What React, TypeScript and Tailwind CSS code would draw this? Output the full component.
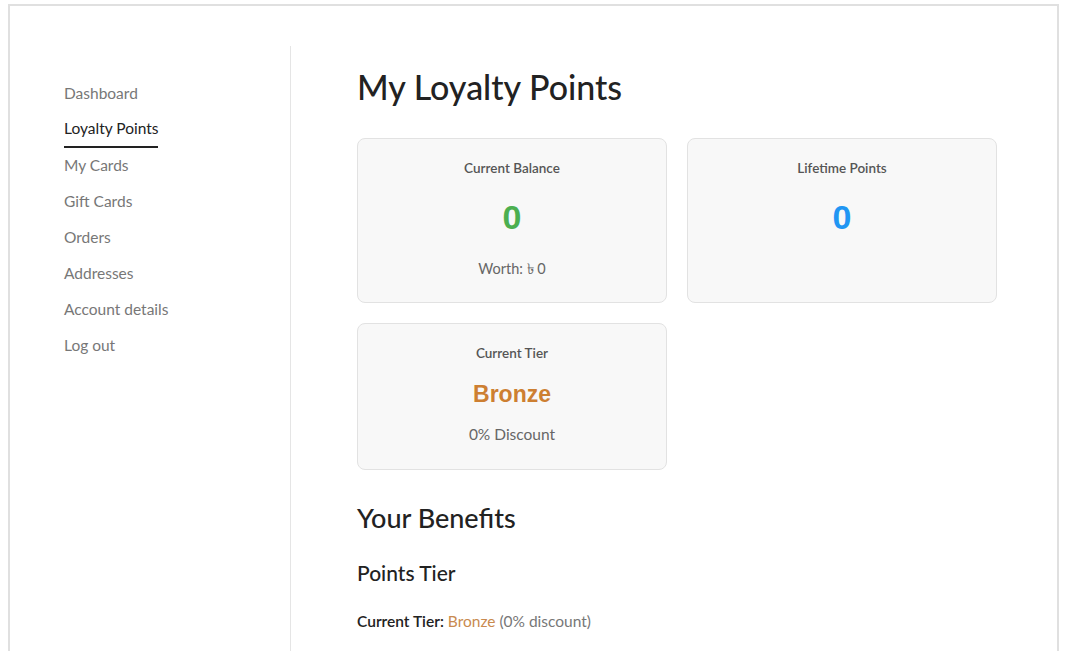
import React from "react";

const navItems = [
  "Dashboard",
  "Loyalty Points",
  "My Cards",
  "Gift Cards",
  "Orders",
  "Addresses",
  "Account details",
  "Log out",
];

const font = { fontFamily: "Lato, 'Noto Sans', sans-serif" };

const StatCard: React.FC<{
  label: string;
  value: string;
  valueClass: string;
  sub?: React.ReactNode;
}> = ({ label, value, valueClass, sub }) => (
  <div className="flex flex-col items-center rounded-lg border border-[#e2e2e2] bg-[#f8f8f8] pt-[19px] pb-[23px]">
    <div className="text-[13.5px] leading-[20px] font-semibold text-[#555]">{label}</div>
    <div className={valueClass}>{value}</div>
    {sub}
  </div>
);

export default function App() {
  return (
    <div className="min-h-screen bg-white" style={font}>
      <div className="ml-[8px] mt-[4px] h-[647px] w-[1051px] border-2 border-b-0 border-[#e0e0e0] pt-[40px]">
        <div className="flex h-full">
          <aside className="w-[281px] shrink-0 border-r border-[#e5e5e5] pl-[54px] pt-[29px]">
            <ul>
              {navItems.map((item) => (
                <li key={item} className="h-[36px]">
                  {item === "Loyalty Points" ? (
                    <span className="inline-block border-b-2 border-[#222] text-[15.5px] leading-[35px] text-[#222]">
                      {item}
                    </span>
                  ) : (
                    <span className="text-[15.5px] leading-[36px] text-[#777]">{item}</span>
                  )}
                </li>
              ))}
            </ul>
          </aside>

          <main className="pl-[66px] pt-[20px]">
            <h1 className="text-[34px] leading-[41px] font-medium text-[#222]">My Loyalty Points</h1>

            <div className="mt-[31px] grid w-[640px] grid-cols-2 gap-[20px]">
              <StatCard
                label="Current Balance"
                value="0"
                valueClass="mt-[19px] text-[34px] leading-[40px] font-bold text-[#4caf50] font-['Liberation_Sans',sans-serif]"
                sub={
                  <div className="mt-[22px] text-[14.5px] leading-[20px] text-[#666]">
                    Worth: ৳ 0
                  </div>
                }
              />
              <StatCard
                label="Lifetime Points"
                value="0"
                valueClass="mt-[19px] text-[34px] leading-[40px] font-bold text-[#2196f3] font-['Liberation_Sans',sans-serif]"
              />
              <div className="flex flex-col items-center rounded-lg border border-[#e2e2e2] bg-[#f8f8f8] pt-[19px] pb-[24px]">
                <div className="text-[13.5px] leading-[20px] font-semibold text-[#555]">Current Tier</div>
                <div className="mt-[16px] text-[23px] leading-[30px] font-bold text-[#cd7f32] font-['Liberation_Sans',sans-serif]">
                  Bronze
                </div>
                <div className="mt-[14px] text-[15.5px] leading-[22px] text-[#666]">0% Discount</div>
              </div>
            </div>

            <h2 className="mt-[31px] text-[27px] leading-[34px] font-medium text-[#222]">Your Benefits</h2>
            <h3 className="mt-[24px] text-[21px] leading-[28px] font-medium text-[#222]">Points Tier</h3>
            <p className="mt-[23px] text-[15.5px] leading-[22px] text-[#777]">
              <span className="font-semibold text-[#222]">Current Tier:</span>{" "}
              <span className="text-[#c98a4f]">Bronze</span> (0% discount)
            </p>
          </main>
        </div>
      </div>
    </div>
  );
}
